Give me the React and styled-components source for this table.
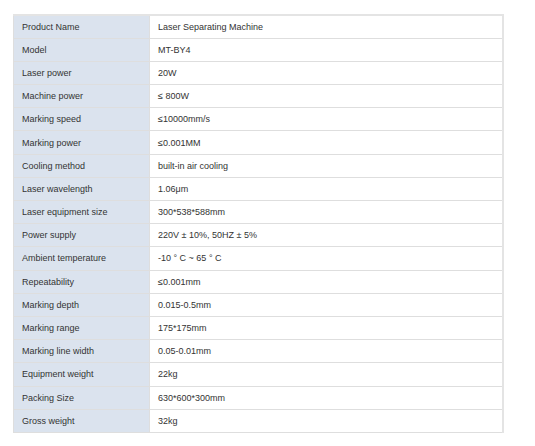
import React from 'react';
import styled, {createGlobalStyle} from 'styled-components';

const GlobalStyle = createGlobalStyle`
  html, body {
    margin: 0;
    padding: 0;
    background: #ffffff;
  }
`;

const Page = styled.div`
  padding: 14px 0 0 13px;
  font-family: 'Liberation Sans', Arial, sans-serif;
`;

const SpecTable = styled.table`
  width: 491px;
  border-collapse: collapse;
  border-top: 2px solid #e4e4e4;
  border-right: 2px solid #e4e4e4;
  table-layout: fixed;
`;

const Row = styled.tr`
  height: 23.2px;
`;

const Cell = styled.td`
  padding: 0 8px;
  border: 1px solid #dedede;
  font-size: 9px;
  color: #333333;
  vertical-align: middle;
  white-space: nowrap;
  background: ${(props) => props.$label ? '#dbe3ee' : '#ffffff'};
  width: ${(props) => props.$label ? '119px' : 'auto'};
`;

const specs = [
  ['Product Name', 'Laser Separating Machine'],
  ['Model', 'MT-BY4'],
  ['Laser power', '20W'],
  ['Machine power', '≤ 800W'],
  ['Marking speed', '≤10000mm/s'],
  ['Marking power', '≤0.001MM'],
  ['Cooling method', 'built-in air cooling'],
  ['Laser wavelength', '1.06μm'],
  ['Laser equipment size', '300*538*588mm'],
  ['Power supply', '220V ± 10%, 50HZ ± 5%'],
  ['Ambient temperature', '-10 ° C ~ 65 ° C'],
  ['Repeatability', '≤0.001mm'],
  ['Marking depth', '0.015-0.5mm'],
  ['Marking range', '175*175mm'],
  ['Marking line width', '0.05-0.01mm'],
  ['Equipment weight', '22kg'],
  ['Packing Size', '630*600*300mm'],
  ['Gross weight', '32kg'],
];

const App = () => (
  <Page>
    <GlobalStyle/>
    <SpecTable>
      <tbody>
        {specs.map(([label, value]) => (
          <Row key={label}>
            <Cell $label>{label}</Cell>
            <Cell>{value}</Cell>
          </Row>
        ))}
      </tbody>
    </SpecTable>
  </Page>
);

export default App;
